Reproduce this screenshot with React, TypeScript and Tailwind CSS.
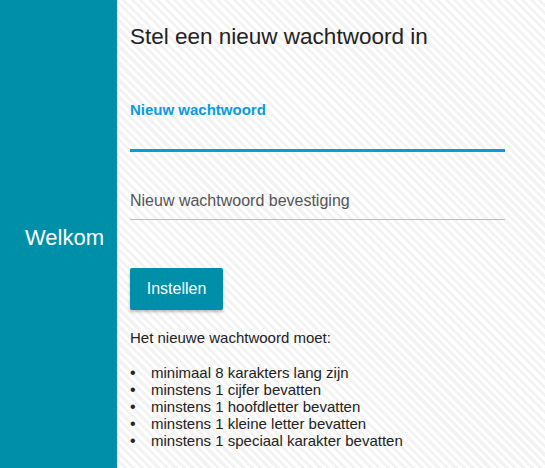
const requirements = [
  "minimaal 8 karakters lang zijn",
  "minstens 1 cijfer bevatten",
  "minstens 1 hoofdletter bevatten",
  "minstens 1 kleine letter bevatten",
  "minstens 1 speciaal karakter bevatten",
];

export default function App() {
  return (
    <div className="flex h-[468px] w-full font-['Liberation_Sans',Arial,sans-serif] bg-[repeating-linear-gradient(45deg,#ffffff_0px,#ffffff_3px,#f3f3f3_3px,#f3f3f3_6px)]">
      <div className="w-[117px] shrink-0 bg-[#008fa8] flex items-center justify-end pr-[13px] pt-[6px]">
        <span className="text-white text-[22px]">Welkom</span>
      </div>

      <div className="flex-1 pl-[13px] pt-[24px]">
        <h1 className="text-[22.5px] leading-[26px] text-[#222]">
          Stel een nieuw wachtwoord in
        </h1>

        <div className="w-[375px] mt-[51px]">
          <label className="block text-[15px] font-bold text-[#0a9ae0] leading-[18px]">
            Nieuw wachtwoord
          </label>
          <input
            type="password"
            className="block w-full h-[33px] bg-transparent outline-none border-b-[3px] border-[#0a9ae0]"
          />
        </div>

        <div className="w-[375px] mt-[37px]">
          <input
            type="password"
            placeholder="Nieuw wachtwoord bevestiging"
            className="block w-full h-[31px] bg-transparent outline-none border-b border-[#bdbdbd] text-[16px] placeholder-[#555] pb-[6px]"
          />
        </div>

        <button className="mt-[48px] h-[42px] w-[93px] bg-[#008fa8] text-white text-[16px] rounded-[2px] shadow-[0_2px_3px_rgba(0,0,0,0.25)]">
          Instellen
        </button>

        <p className="mt-[19px] text-[15px] leading-[17px] text-[#222]">
          Het nieuwe wachtwoord moet:
        </p>
        <ul className="mt-[18px] text-[15px] leading-[17px] text-[#222]">
          {requirements.map((r) => (
            <li key={r} className="flex">
              <span className="w-[21px] shrink-0 text-[16px]">•</span>
              <span>{r}</span>
            </li>
          ))}
        </ul>
      </div>
    </div>
  );
}
